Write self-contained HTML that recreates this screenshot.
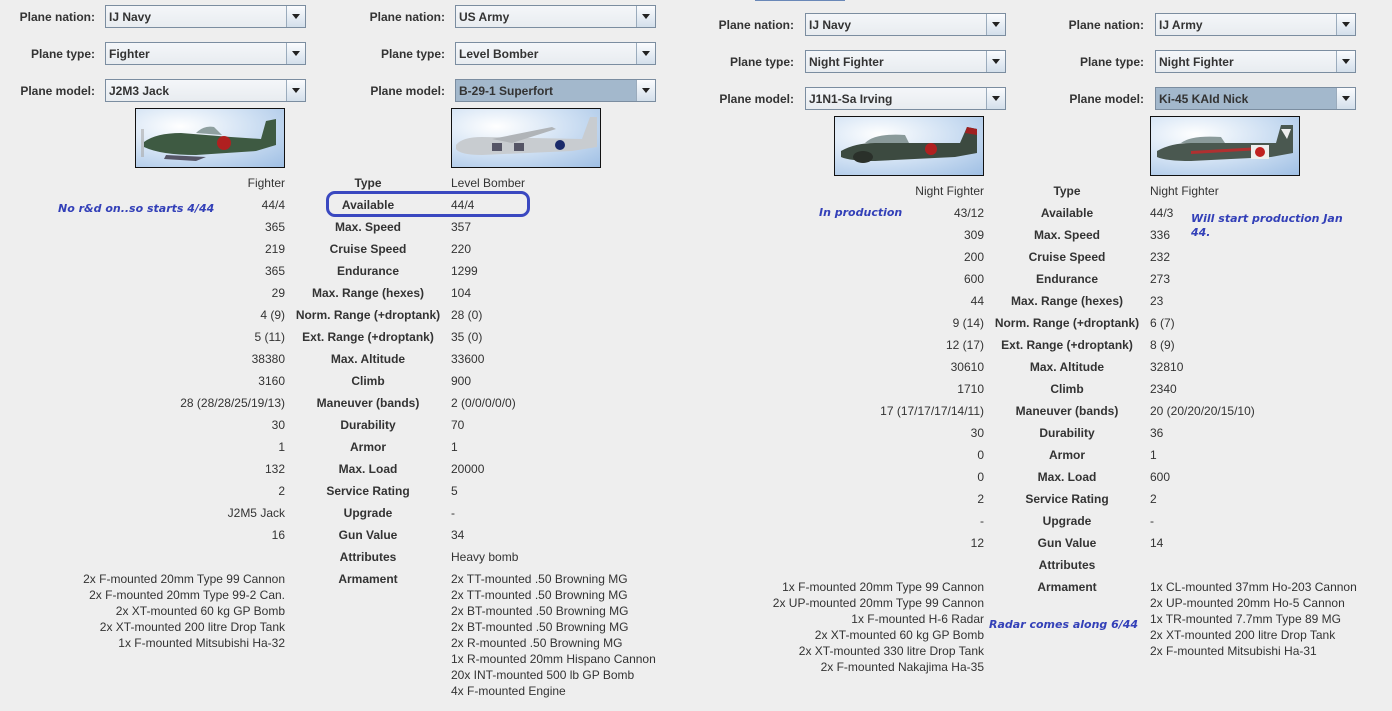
<!DOCTYPE html>
<html><head><meta charset="utf-8"><style>
html,body{margin:0;padding:0}
body{width:1392px;height:703px;background:#eeeeee;position:relative;overflow:hidden;font-family:"Liberation Sans",Arial,sans-serif;font-size:12px;color:#333;}
.p{position:absolute;width:690px;height:703px}
.lb{position:absolute;font-weight:bold;color:#333;text-align:right;width:95px;line-height:16px}
.cb{position:absolute;width:201px;height:23px;border:1px solid #7b8da0;background:linear-gradient(#f4f6f9,#e8ecf0);box-sizing:border-box}
.cb span{position:absolute;left:3px;top:3px;font-weight:bold;color:#333;line-height:16px}
.cb.sel{background:#a3b8cc}
.cb b{position:absolute;right:0;top:0;width:18px;height:21px;border-left:1px solid #9aabbc;background:linear-gradient(#fbfcfe,#d3dfeb)}
.cb b:after{content:"";position:absolute;left:5px;top:8px;border-left:4px solid transparent;border-right:4px solid transparent;border-top:5px solid #222}
.img{position:absolute;width:148px;height:58px;border:1px solid #111;background:radial-gradient(ellipse at 30% 30%,#fff,#cfe0f3 50%,#9fbfe4)}
.img svg{width:148px;height:58px;display:block}
.v{position:absolute;width:280px;left:5px;text-align:right;line-height:16px;white-space:nowrap}
.k{position:absolute;width:180px;left:278px;text-align:center;font-weight:bold;line-height:16px;white-space:nowrap}
.w{position:absolute;left:451px;line-height:16px;white-space:nowrap}
.n{position:absolute;font-family:"DejaVu Sans",sans-serif;font-style:italic;font-weight:bold;color:#3340b8;font-size:11px;line-height:14px}
.rows{position:absolute;left:0;top:1px;width:690px;height:700px}
</style></head><body>

<div style="position:absolute;left:755px;top:0;width:90px;height:1px;background:#6a88b8"></div>

<!-- LEFT PANEL -->
<div class="p" style="left:0;top:0">
<div class="lb" style="left:0;top:9px">Plane nation:</div>
<div class="cb" style="left:105px;top:5px"><span>IJ Navy</span><b></b></div>
<div class="lb" style="left:0;top:46px">Plane type:</div>
<div class="cb" style="left:105px;top:42px"><span>Fighter</span><b></b></div>
<div class="lb" style="left:0;top:83px">Plane model:</div>
<div class="cb" style="left:105px;top:79px"><span>J2M3 Jack</span><b></b></div>
<div class="lb" style="left:350px;top:9px">Plane nation:</div>
<div class="cb" style="left:455px;top:5px"><span>US Army</span><b></b></div>
<div class="lb" style="left:350px;top:46px">Plane type:</div>
<div class="cb" style="left:455px;top:42px"><span>Level Bomber</span><b></b></div>
<div class="lb" style="left:350px;top:83px">Plane model:</div>
<div class="cb sel" style="left:455px;top:79px"><span>B-29-1 Superfort</span><b></b></div>

<div class="img" style="left:135px;top:108px"><svg viewBox="0 0 148 58"><path d="M8 33 Q20 24 45 24 L95 28 L125 30 L130 12 L140 10 L140 36 L120 42 L60 46 Q25 46 8 38Z" fill="#3e5a42"/><path d="M60 24 Q68 16 78 18 L86 26Z" fill="#8fa0a0"/><circle cx="88" cy="34" r="7" fill="#b02020"/><path d="M30 46 L70 48 L60 52 L28 50Z" fill="#556"/><rect x="5" y="20" width="3" height="28" fill="#aaa" opacity=".6"/></svg></div>
<div class="img" style="left:451px;top:108px"><svg viewBox="0 0 148 58"><path d="M4 36 Q10 28 30 28 L130 30 L138 8 L145 8 L145 38 L120 42 L30 46 Q8 46 4 40Z" fill="#c8ccd0"/><path d="M40 30 L100 18 L104 20 L60 34Z" fill="#b0b4b8"/><circle cx="108" cy="36" r="5" fill="#1a2a6a"/><rect x="40" y="34" width="10" height="8" fill="#556"/><rect x="62" y="34" width="10" height="8" fill="#556"/></svg></div>

<div class="rows">
<div class="v" style="top:174px">Fighter</div><div class="k" style="top:174px">Type</div><div class="w" style="top:174px">Level Bomber</div>
<div class="v" style="top:196px">44/4</div><div class="k" style="top:196px">Available</div><div class="w" style="top:196px">44/4</div>
<div class="v" style="top:218px">365</div><div class="k" style="top:218px">Max. Speed</div><div class="w" style="top:218px">357</div>
<div class="v" style="top:240px">219</div><div class="k" style="top:240px">Cruise Speed</div><div class="w" style="top:240px">220</div>
<div class="v" style="top:262px">365</div><div class="k" style="top:262px">Endurance</div><div class="w" style="top:262px">1299</div>
<div class="v" style="top:284px">29</div><div class="k" style="top:284px">Max. Range (hexes)</div><div class="w" style="top:284px">104</div>
<div class="v" style="top:306px">4 (9)</div><div class="k" style="top:306px">Norm. Range (+droptank)</div><div class="w" style="top:306px">28 (0)</div>
<div class="v" style="top:328px">5 (11)</div><div class="k" style="top:328px">Ext. Range (+droptank)</div><div class="w" style="top:328px">35 (0)</div>
<div class="v" style="top:350px">38380</div><div class="k" style="top:350px">Max. Altitude</div><div class="w" style="top:350px">33600</div>
<div class="v" style="top:372px">3160</div><div class="k" style="top:372px">Climb</div><div class="w" style="top:372px">900</div>
<div class="v" style="top:394px">28 (28/28/25/19/13)</div><div class="k" style="top:394px">Maneuver (bands)</div><div class="w" style="top:394px">2 (0/0/0/0/0)</div>
<div class="v" style="top:416px">30</div><div class="k" style="top:416px">Durability</div><div class="w" style="top:416px">70</div>
<div class="v" style="top:438px">1</div><div class="k" style="top:438px">Armor</div><div class="w" style="top:438px">1</div>
<div class="v" style="top:460px">132</div><div class="k" style="top:460px">Max. Load</div><div class="w" style="top:460px">20000</div>
<div class="v" style="top:482px">2</div><div class="k" style="top:482px">Service Rating</div><div class="w" style="top:482px">5</div>
<div class="v" style="top:504px">J2M5 Jack</div><div class="k" style="top:504px">Upgrade</div><div class="w" style="top:504px">-</div>
<div class="v" style="top:526px">16</div><div class="k" style="top:526px">Gun Value</div><div class="w" style="top:526px">34</div>
<div class="k" style="top:548px">Attributes</div><div class="w" style="top:548px">Heavy bomb</div>
<div class="k" style="top:570px">Armament</div>
<div class="v" style="top:570px">2x F-mounted 20mm Type 99 Cannon<br>2x F-mounted 20mm Type 99-2 Can.<br>2x XT-mounted 60 kg GP Bomb<br>2x XT-mounted 200 litre Drop Tank<br>1x F-mounted Mitsubishi Ha-32</div>
<div class="w" style="top:570px">2x TT-mounted .50 Browning MG<br>2x TT-mounted .50 Browning MG<br>2x BT-mounted .50 Browning MG<br>2x BT-mounted .50 Browning MG<br>2x R-mounted .50 Browning MG<br>1x R-mounted 20mm Hispano Cannon<br>20x INT-mounted 500 lb GP Bomb<br>4x F-mounted Engine</div>
</div>
<div style="position:absolute;left:326px;top:191px;width:198px;height:20px;border:3px solid #3a48c0;border-radius:9px"></div>
<div class="n" style="left:58px;top:202px">No r&amp;d on..so starts 4/44</div>
</div>

<!-- RIGHT PANEL -->
<div class="p" style="left:699px;top:8px">
<div class="lb" style="left:0;top:9px">Plane nation:</div>
<div class="cb" style="left:106px;top:5px"><span>IJ Navy</span><b></b></div>
<div class="lb" style="left:0;top:46px">Plane type:</div>
<div class="cb" style="left:106px;top:42px"><span>Night Fighter</span><b></b></div>
<div class="lb" style="left:0;top:83px">Plane model:</div>
<div class="cb" style="left:106px;top:79px"><span>J1N1-Sa Irving</span><b></b></div>
<div class="lb" style="left:350px;top:9px">Plane nation:</div>
<div class="cb" style="left:456px;top:5px"><span>IJ Army</span><b></b></div>
<div class="lb" style="left:350px;top:46px">Plane type:</div>
<div class="cb" style="left:456px;top:42px"><span>Night Fighter</span><b></b></div>
<div class="lb" style="left:350px;top:83px">Plane model:</div>
<div class="cb sel" style="left:456px;top:79px"><span>Ki-45 KAId Nick</span><b></b></div>

<div class="img" style="left:135px;top:108px"><svg viewBox="0 0 148 58"><path d="M6 34 Q20 26 40 26 L125 26 L132 10 L142 12 L142 36 L120 40 L40 44 Q15 44 6 40Z" fill="#3c4a40"/><path d="M132 10 L142 12 L142 18 L130 16Z" fill="#a02020"/><circle cx="96" cy="32" r="6" fill="#b02020"/><path d="M30 26 Q40 16 70 18 L74 26Z" fill="#8a9a9a"/><ellipse cx="28" cy="40" rx="10" ry="6" fill="#2a302a"/></svg></div>
<div class="img" style="left:451px;top:108px"><svg viewBox="0 0 148 58"><path d="M6 34 Q20 26 40 26 L125 26 L130 8 L142 8 L142 36 L120 40 L40 44 Q15 44 6 40Z" fill="#4a5850"/><path d="M40 34 L110 30 L110 33 L40 37Z" fill="#b03030"/><rect x="100" y="28" width="18" height="14" fill="#eee"/><circle cx="109" cy="35" r="5" fill="#c02020"/><path d="M130 12 L140 12 L136 22Z" fill="#eee"/><path d="M30 26 Q40 18 70 20 L74 26Z" fill="#8a9a9a"/></svg></div>

<div class="rows">
<div class="v" style="top:174px">Night Fighter</div><div class="k" style="top:174px">Type</div><div class="w" style="top:174px">Night Fighter</div>
<div class="v" style="top:196px">43/12</div><div class="k" style="top:196px">Available</div><div class="w" style="top:196px">44/3</div>
<div class="v" style="top:218px">309</div><div class="k" style="top:218px">Max. Speed</div><div class="w" style="top:218px">336</div>
<div class="v" style="top:240px">200</div><div class="k" style="top:240px">Cruise Speed</div><div class="w" style="top:240px">232</div>
<div class="v" style="top:262px">600</div><div class="k" style="top:262px">Endurance</div><div class="w" style="top:262px">273</div>
<div class="v" style="top:284px">44</div><div class="k" style="top:284px">Max. Range (hexes)</div><div class="w" style="top:284px">23</div>
<div class="v" style="top:306px">9 (14)</div><div class="k" style="top:306px">Norm. Range (+droptank)</div><div class="w" style="top:306px">6 (7)</div>
<div class="v" style="top:328px">12 (17)</div><div class="k" style="top:328px">Ext. Range (+droptank)</div><div class="w" style="top:328px">8 (9)</div>
<div class="v" style="top:350px">30610</div><div class="k" style="top:350px">Max. Altitude</div><div class="w" style="top:350px">32810</div>
<div class="v" style="top:372px">1710</div><div class="k" style="top:372px">Climb</div><div class="w" style="top:372px">2340</div>
<div class="v" style="top:394px">17 (17/17/17/14/11)</div><div class="k" style="top:394px">Maneuver (bands)</div><div class="w" style="top:394px">20 (20/20/20/15/10)</div>
<div class="v" style="top:416px">30</div><div class="k" style="top:416px">Durability</div><div class="w" style="top:416px">36</div>
<div class="v" style="top:438px">0</div><div class="k" style="top:438px">Armor</div><div class="w" style="top:438px">1</div>
<div class="v" style="top:460px">0</div><div class="k" style="top:460px">Max. Load</div><div class="w" style="top:460px">600</div>
<div class="v" style="top:482px">2</div><div class="k" style="top:482px">Service Rating</div><div class="w" style="top:482px">2</div>
<div class="v" style="top:504px">-</div><div class="k" style="top:504px">Upgrade</div><div class="w" style="top:504px">-</div>
<div class="v" style="top:526px">12</div><div class="k" style="top:526px">Gun Value</div><div class="w" style="top:526px">14</div>
<div class="k" style="top:548px">Attributes</div>
<div class="k" style="top:570px">Armament</div>
<div class="v" style="top:570px">1x F-mounted 20mm Type 99 Cannon<br>2x UP-mounted 20mm Type 99 Cannon<br>1x F-mounted H-6 Radar<br>2x XT-mounted 60 kg GP Bomb<br>2x XT-mounted 330 litre Drop Tank<br>2x F-mounted Nakajima Ha-35</div>
<div class="w" style="top:570px">1x CL-mounted 37mm Ho-203 Cannon<br>2x UP-mounted 20mm Ho-5 Cannon<br>1x TR-mounted 7.7mm Type 89 MG<br>2x XT-mounted 200 litre Drop Tank<br>2x F-mounted Mitsubishi Ha-31</div>
</div>
<div class="n" style="left:120px;top:198px">In production</div>
<div class="n" style="left:492px;top:204px">Will start production Jan<br>44.</div>
<div class="n" style="left:290px;top:610px">Radar comes along 6/44</div>
</div>
</body></html>
